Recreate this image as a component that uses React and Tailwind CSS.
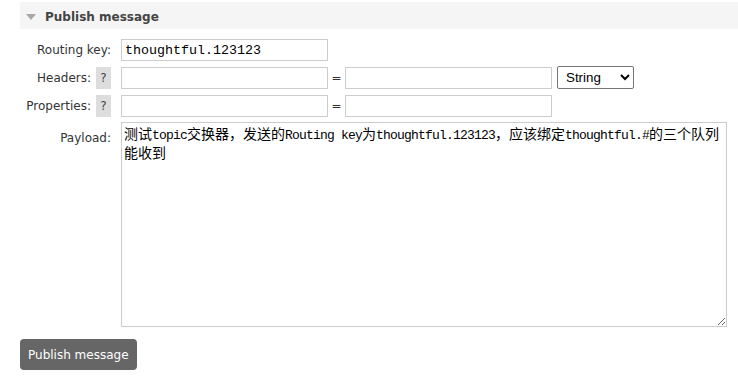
export default function App() {
  const inputCls =
    "h-[22px] w-[207px] border border-[#cccccc] bg-white px-[3px] outline-none";
  const cjk = "font-['Noto_Sans_CJK_SC',sans-serif] text-[14px] tracking-normal";
  return (
    <div className="w-[738px] h-[383px] bg-white pl-[20px] pt-[2px] font-['DejaVu_Sans',sans-serif] text-[12px] text-[#333333]">
      <div className="h-[27px] bg-[#f5f5f5] flex items-center">
        <svg width="10" height="6" viewBox="0 0 10 6" className="ml-[6px] mt-[2px]">
          <path d="M0 0 L10 0 L5 6 Z" fill="#a8a8a8" />
        </svg>
        <span className="ml-[9px] mt-[2px] font-bold text-[12px] text-[#444444]">Publish message</span>
      </div>

      <div className="mt-[10px] flex flex-col">
        {/* Routing key */}
        <div className="flex items-center">
          <div className="w-[91px] text-right">Routing key:</div>
          <input
            className={`${inputCls} ml-[10px] font-['Liberation_Mono',monospace] text-[13.33px] text-black`}
            defaultValue="thoughtful.123123"
          />
        </div>

        {/* Headers */}
        <div className="mt-[5px] flex items-center">
          <div className="w-[91px] flex items-center justify-end">
            <span>Headers:</span>
            <span className="ml-[5px] w-[15px] h-[22px] bg-[#dddddd] text-[#444444] flex items-center justify-center">?</span>
          </div>
          <input className={`${inputCls} ml-[10px]`} />
          <span className="w-[17px] text-center">=</span>
          <input className={inputCls} />
          <select className="ml-[5px] h-[23px] w-[77px] border border-[#767676] rounded-[2px] bg-white pl-[4px] font-['Liberation_Sans',Arial,sans-serif] text-[13.33px] text-black">
            <option>String</option>
            <option>Number</option>
            <option>Boolean</option>
          </select>
        </div>

        {/* Properties */}
        <div className="mt-[6px] flex items-center">
          <div className="w-[91px] flex items-center justify-end">
            <span>Properties:</span>
            <span className="ml-[5px] w-[15px] h-[22px] bg-[#dddddd] text-[#444444] flex items-center justify-center">?</span>
          </div>
          <input className={`${inputCls} ml-[10px]`} />
          <span className="w-[17px] text-center">=</span>
          <input className={inputCls} />
        </div>

        {/* Payload */}
        <div className="mt-[5px] flex items-start">
          <div className="w-[91px] text-right pt-[7px]">Payload:</div>
          <div
            className="ml-[10px] w-[606px] h-[205px] border border-[#cccccc] bg-white p-[2px] overflow-auto resize text-black font-['Liberation_Mono',monospace] text-[13px] tracking-[-0.8px] leading-[16px] break-all"
          >
            <span className={cjk}>测试</span>topic<span className={cjk}>交换器，发送的</span>Routing key<span className={cjk}>为</span>thoughtful.123123<span className={cjk}>，应该绑定</span>thoughtful.#<span className={cjk}>的三个队列能收到</span>
          </div>
        </div>

        <div className="mt-[12px]">
          <button className="h-[31px] px-[8px] rounded-[4px] bg-[#666666] text-white text-[12px]">
            Publish message
          </button>
        </div>
      </div>
    </div>
  );
}
